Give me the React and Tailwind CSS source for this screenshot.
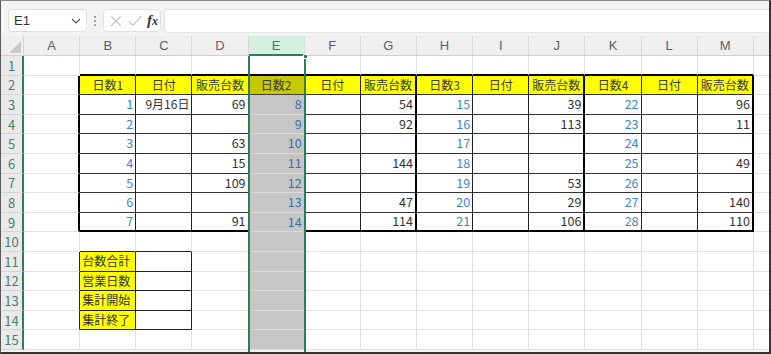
import React from 'react';

const COLS = 'ABCDEFGHIJKLM'.split('');
const DATA = {
  2: ['日数1', '日付', '販売台数', '日数2', '日付', '販売台数', '日数3', '日付', '販売台数', '日数4', '日付', '販売台数'],
  3: ['1', '9月16日', '69', '8', '', '54', '15', '', '39', '22', '', '96'],
  4: ['2', '', '', '9', '', '92', '16', '', '113', '23', '', '11'],
  5: ['3', '', '63', '10', '', '', '17', '', '', '24', '', ''],
  6: ['4', '', '15', '11', '', '144', '18', '', '', '25', '', '49'],
  7: ['5', '', '109', '12', '', '', '19', '', '53', '26', '', ''],
  8: ['6', '', '', '13', '', '47', '20', '', '29', '27', '', '140'],
  9: ['7', '', '91', '14', '', '114', '21', '', '106', '28', '', '110'],
};
const LABELS = { 11: '台数合計', 12: '営業日数', 13: '集計開始', 14: '集計終了' };

function vBorder(r, c) {
  if (r >= 2 && r <= 9) {
    if (c === 0 || c === 6 || c === 9 || c === 12) return 'border-r-2 border-r-black';
    return 'border-r border-r-[#222]';
  }
  if (r >= 11 && r <= 14 && c <= 2) return 'border-r border-r-[#222]';
  if (c === 4) return 'border-r border-r-[#d0d0d0]';
  return 'border-r border-r-[#e1e1e1]';
}

function hBorder(r, c) {
  if (c === 4) {
    if (r === 1) return 'border-b-2 border-b-black';
    if (r === 2) return 'border-b border-b-[#444]';
    return 'border-b border-b-[#dadada]';
  }
  if (c >= 1 && c <= 12) {
    if (r === 1 || r === 9) return 'border-b-2 border-b-black';
    if (r >= 2 && r <= 8) return 'border-b border-b-[#333]';
  }
  if (c >= 1 && c <= 2 && r >= 10 && r <= 14) return 'border-b border-b-[#222]';
  return 'border-b border-b-[#e1e1e1]';
}

function cellInfo(r, c) {
  let bg = 'bg-white';
  let text = '';
  let color = 'text-[#333]';
  let align = 'justify-end pr-[2px]';
  let size = 'text-[12.5px]';
  if (c === 4) {
    bg = r === 1 ? 'bg-white' : r === 2 ? 'bg-[#c8c800]' : 'bg-[#c6c6c6]';
  } else if (r === 2 && c >= 1) {
    bg = 'bg-[#ffff00]';
  } else if (r >= 11 && r <= 14 && c === 1) {
    bg = 'bg-[#ffff00]';
  }
  if (DATA[r] && c >= 1) {
    text = DATA[r][c - 1];
    if (r === 2) {
      align = 'justify-center';
      size = 'text-[12px]';
      color = 'text-[#3a3a3a]';
    } else if (c === 1 || c === 7 || c === 10) {
      color = 'text-[#3d86d6]';
    } else if (c === 4) {
      color = 'text-[#3471b1]';
    } else if (c === 2) {
      size = 'text-[12px]';
    }
  }
  if (LABELS[r] && c === 1) {
    text = LABELS[r];
    align = 'justify-start pl-[2px]';
    size = 'text-[12px]';
  }
  return { bg, text, color, align, size };
}

function Cell({ r, c }) {
  const { bg, text, color, align, size } = cellInfo(r, c);
  return (
    <div
      className={`w-[56.15px] shrink-0 flex items-center overflow-hidden whitespace-nowrap leading-none ${size} ${bg} ${color} ${align} ${vBorder(r, c)} ${hBorder(r, c)}`}
    >
      {text}
    </div>
  );
}

function Row({ r }) {
  return (
    <div className="flex h-[19.6px]">
      <div className="w-[23px] shrink-0 bg-[#e9e9e9] border-r-2 border-r-[#2f7d55] border-b border-b-[#d4d4d4] flex items-center justify-center text-[13px] text-[#4f7f66] leading-none">
        {r}
      </div>
      {COLS.map((_, c) => (
        <Cell key={c} r={r} c={c} />
      ))}
      <div className="flex-1 bg-white border-b border-b-[#e1e1e1]" />
    </div>
  );
}

export default function App() {
  const rows = Array.from({ length: 15 }, (_, i) => i + 1);
  return (
    <div
      className="w-[771px] h-[354px] overflow-hidden bg-[#f3f3f3] border-t border-t-[#8a8a8a] border-l border-l-[#5a5a5a] border-r-2 border-r-[#333] border-b-2 border-b-[#333] flex flex-col"
      style={{ fontFamily: '"Noto Sans CJK JP", "Noto Sans", sans-serif' }}
    >
      {/* formula bar */}
      <div className="h-[35px] shrink-0 flex items-start pt-[8px] pl-[7px]">
        <div className="w-[79px] h-[23px] bg-white border border-[#dedede] rounded-[4px] flex items-center justify-between pl-[5px] pr-[5px]">
          <span className="text-[13px] text-[#333] leading-none" style={{ fontFamily: '"Liberation Sans", sans-serif' }}>E1</span>
          <svg width="10" height="6" viewBox="0 0 10 6">
            <path d="M1 1 L5 5 L9 1" fill="none" stroke="#555" strokeWidth="1.1" />
          </svg>
        </div>
        <div className="w-[16px] h-[23px] flex flex-col items-center justify-center gap-[2px]">
          <div className="w-[2px] h-[2px] rounded-full bg-[#8a8a8a]" />
          <div className="w-[2px] h-[2px] rounded-full bg-[#8a8a8a]" />
          <div className="w-[2px] h-[2px] rounded-full bg-[#8a8a8a]" />
        </div>
        <div className="w-[58px] h-[23px] bg-white border border-[#e2e2e2] rounded-[4px] flex items-center pl-[4px]">
          <svg width="14" height="14" viewBox="0 0 14 14" className="ml-[1px]">
            <path d="M2 2 L12 12 M12 2 L2 12" stroke="#c4c4c4" strokeWidth="1.2" fill="none" />
          </svg>
          <svg width="16" height="14" viewBox="0 0 16 14" className="ml-[4px]">
            <path d="M2 7.5 L6 11.5 L14 2.5" stroke="#c4c4c4" strokeWidth="1.2" fill="none" />
          </svg>
          <span className="ml-[4px] text-[15px] text-[#333] italic font-bold leading-none" style={{ fontFamily: '"Liberation Serif", serif' }}>
            f<span className="text-[12px]">x</span>
          </span>
        </div>
        <div className="flex-1 ml-[3px] h-[24px] bg-white border border-[#e2e2e2] rounded-l-[4px] border-r-0" />
      </div>

      {/* column header */}
      <div className="flex h-[20px] shrink-0 bg-[#efefef]">
        <div className="w-[23px] shrink-0 border-r border-r-[#d6d6d6] border-b border-b-[#cfcfcf] relative">
          <svg width="23" height="20" viewBox="0 0 23 20" className="absolute left-0 top-0">
            <polygon points="8,17 20,17 20,5" fill="#c9c9c9" />
          </svg>
        </div>
        {COLS.map((l) =>
          l === 'E' ? (
            <div
              key={l}
              className="w-[56.15px] shrink-0 bg-[#d3f0e0] border-b-2 border-b-[#2f7d55] border-r border-r-[#cfe3d7] flex items-center justify-center text-[13px] text-[#2f7d55] leading-none"
              style={{ fontFamily: '"Liberation Sans", sans-serif' }}
            >
              {l}
            </div>
          ) : (
            <div
              key={l}
              className="w-[56.15px] shrink-0 border-r border-r-[#d8d8d8] border-b border-b-[#cfcfcf] flex items-center justify-center text-[13px] text-[#5f5f5f] leading-none"
              style={{ fontFamily: '"Liberation Sans", sans-serif' }}
            >
              {l}
            </div>
          )
        )}
        <div className="flex-1 border-b border-b-[#cfcfcf]" />
      </div>

      {/* sheet body */}
      <div className="relative flex-1">
        {rows.map((r) => (
          <Row key={r} r={r} />
        ))}
        {/* selection of column E */}
        <div className="absolute left-[246.6px] top-0 bottom-[-4px] w-[58.15px] border-l-2 border-r-2 border-[#2f7d55] pointer-events-none">
          <div className="absolute right-[-4px] top-[-2px] w-[5px] h-[5px] bg-[#2f7d55] border border-white" />
        </div>
      </div>
    </div>
  );
}
